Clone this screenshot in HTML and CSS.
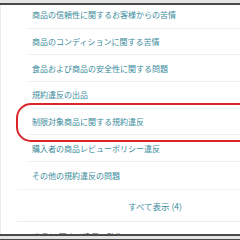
FILE: index.html
```html
<!DOCTYPE html>
<html lang="ja">
<head>
<meta charset="utf-8">
<link rel="stylesheet" href="styles.css">
</head>
<body>
<div class="frame">
  <div class="topbar"></div>
  <div class="viewport">
    <ul class="list">
      <li class="row"><a>商品の信頼性に関するお客様からの苦情</a></li>
      <li class="row"><a>商品のコンディションに関する苦情</a></li>
      <li class="row"><a>食品および商品の安全性に関する問題</a></li>
      <li class="row"><a>規約違反の出品</a></li>
      <li class="row marked"><a>制限対象商品に関する規約違反</a><span class="ring"></span></li>
      <li class="row"><a>購入者の商品レビューポリシー違反</a></li>
      <li class="row last"><a>その他の規約違反の問題</a></li>
    </ul>
    <div class="showall"><a>すべて表示 (4)</a></div>
    <div class="next">出品に 関する違反の動作</div>
  </div>
  <div class="bottombar"></div>
</div>
</body>
</html>
```
FILE: styles.css
```css
html, body {
  margin: 0;
  padding: 0;
  background: #ffffff;
}
body {
  font-family: "Noto Sans CJK JP", "Noto Sans", sans-serif;
  font-size: 8px;
}
.frame {
  width: 240px;
  height: 240px;
  display: flex;
  flex-direction: column;
  overflow: hidden;
}
.topbar {
  height: 3px;
  flex: none;
  background: #e4e4e4;
  border-bottom: 2px solid #4a4a4a;
}
.viewport {
  flex: 1;
  overflow: hidden;
  border-left: 1px solid #ececec;
}
.list {
  list-style: none;
  margin: -3.2px 0 0 0;
  padding: 0;
}
.row {
  position: relative;
  height: 26.7px;
  box-sizing: border-box;
  margin-left: 26px;
  padding-left: 5px;
  border-bottom: 1px solid #f1f1f1;
  display: flex;
  align-items: center;
}
.row a, .showall a {
  color: #3a8b9c;
  line-height: 11px;
}
.showall a {
  font-size: 8.5px;
}
.row.last {
  border-bottom: none;
}
.ring {
  position: absolute;
  left: -11px;
  right: -20px;
  top: -6px;
  bottom: -7.5px;
  border: 2px solid #d8262b;
  border-radius: 15px;
}
.showall {
  margin-left: 16px;
  height: 33px;
  box-sizing: border-box;
  padding-left: 111px;
  padding-top: 3px;
  display: flex;
  align-items: center;
  border-top: 1px solid #f3f3f3;
  border-bottom: 1px solid #ededed;
}
.next {
  margin-left: 32px;
  padding-top: 9px;
  color: #555;
  font-size: 8px;
  line-height: 11px;
}
.bottombar {
  flex: none;
  height: 3px;
  background: #e4e4e4;
  border-top: 2px solid #4a4a4a;
  border-bottom: 1px solid #4a4a4a;
}
```
